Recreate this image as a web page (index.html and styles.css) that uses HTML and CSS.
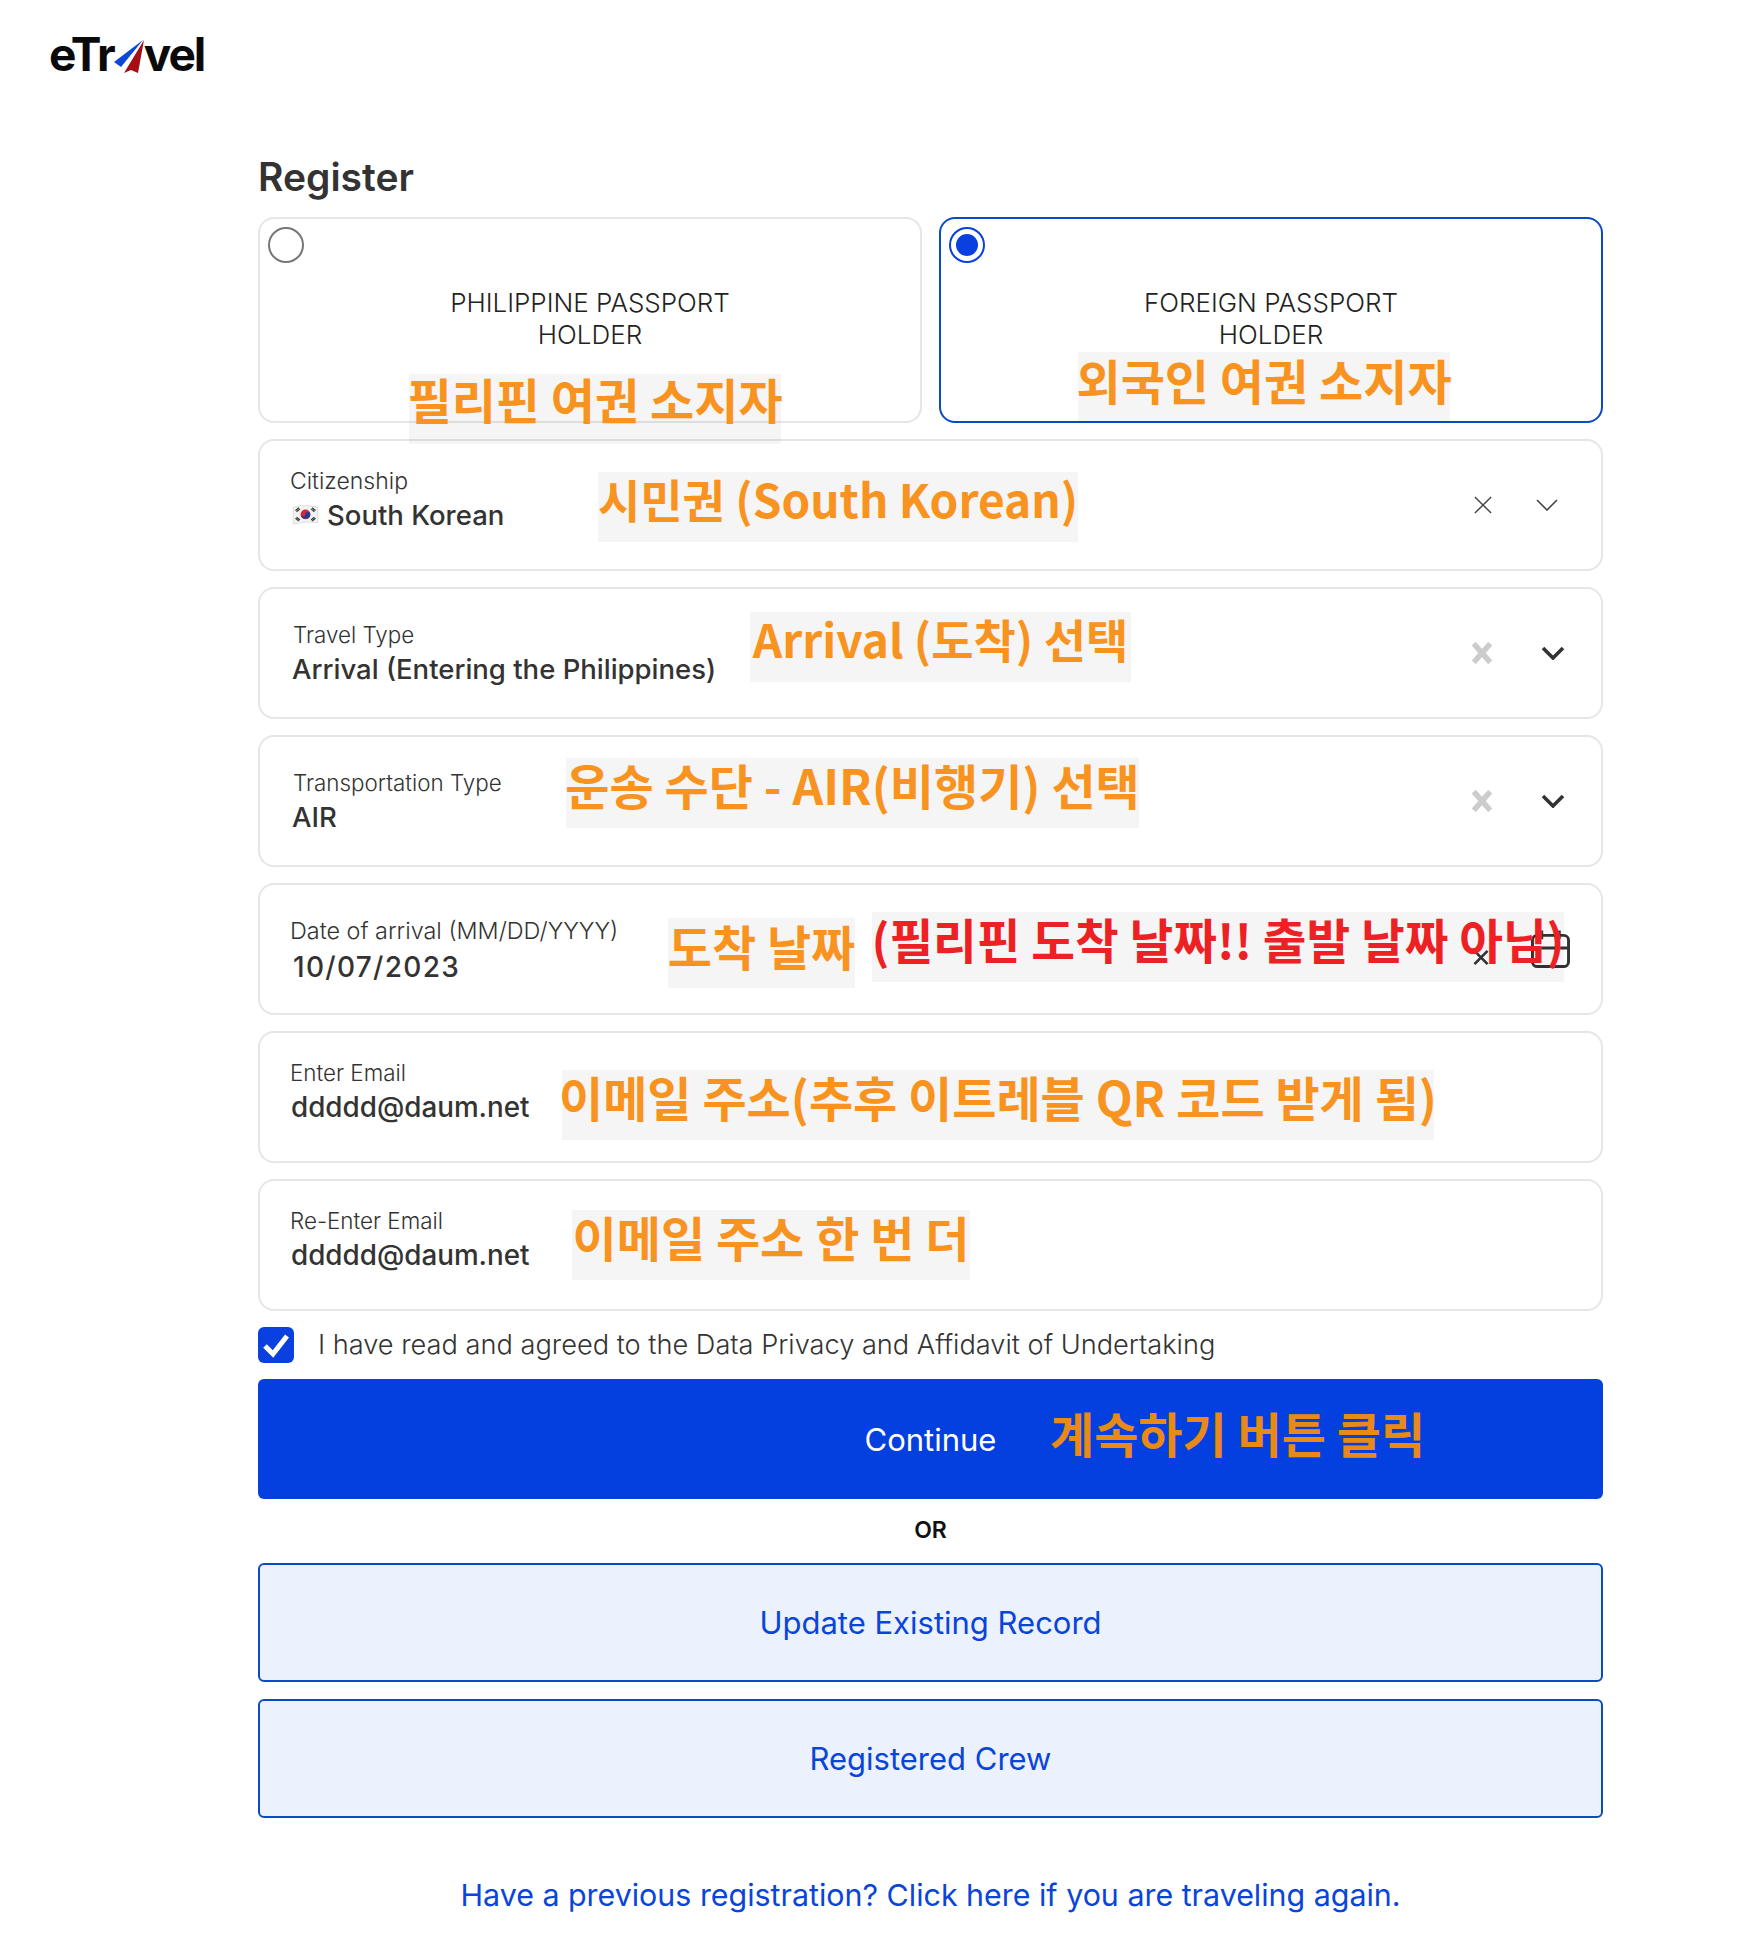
FILE: index.html
```html
<!DOCTYPE html>
<html lang="en">
<head>
<meta charset="utf-8">
<title>eTravel Register</title>
<link rel="stylesheet" href="styles.css">
</head>
<body>
<header class="site-header">
  <div class="logo">
    <span>eTr</span>
    <svg class="logo-plane" viewBox="0 0 32 36" aria-hidden="true">
      <path d="M30 1 L1 23 L8 28 Z" fill="#0b47d9"/>
      <path d="M31 1 L11 34 L18 31 L25 34 Z" fill="#a50e15"/>
    </svg>
    <span>vel</span>
  </div>
</header>
<main class="form">
  <h1 class="title">Register</h1>
  <div class="passport-row">
    <div class="passport">
      <span class="radio"></span>
      <p class="passport-label">PHILIPPINE PASSPORT<br>HOLDER</p>
      <span class="note note-1">필리핀 여권 소지자</span>
    </div>
    <div class="passport passport-on">
      <span class="radio radio-on"></span>
      <p class="passport-label">FOREIGN PASSPORT<br>HOLDER</p>
      <span class="note note-2">외국인 여권 소지자</span>
    </div>
  </div>

  <div class="field">
    <div class="field-text">
      <div class="label label-lg">Citizenship</div>
      <div class="value value-flag">
        <svg class="flag" viewBox="0 0 24 18" aria-hidden="true">
          <path d="M1 2 Q12 -1 23 2 L23 16 Q12 14 1 17 Z" fill="#f3f3f3" stroke="#cfcfcf" stroke-width=".6"/>
          <circle cx="12" cy="8.5" r="4.4" fill="#d5263a"/>
          <path d="M7.7 8.5 a4.4 4.4 0 0 0 8.7 0 a2.2 2.2 0 0 0 -4.4 0 a2.2 2.2 0 0 1 -4.3 0Z" fill="#1c3f94"/>
          <path d="M3 5 L6 2.5 M4 6 L7 3.5 M18 2.5 L21 5 M17 3.5 L20 6 M3 12 L6 14.5 M4 11 L7 13.5 M18 14.5 L21 12 M17 13.5 L20 11" stroke="#333" stroke-width="1.1"/>
        </svg>
        <span>South Korean</span>
      </div>
    </div>
    <span class="note note-3">시민권 (South Korean)</span>
    <div class="icons">
      <svg class="ico-x-thin" viewBox="0 0 20 20"><path d="M1 1 L19 19 M19 1 L1 19" stroke="#444" stroke-width="1.6" fill="none"/></svg>
      <svg class="ico-chev-thin" viewBox="0 0 22 12"><path d="M1 1 L11 11 L21 1" stroke="#444" stroke-width="1.6" fill="none"/></svg>
    </div>
  </div>

  <div class="field field-deep">
    <div class="field-text">
      <div class="label">Travel Type</div>
      <div class="value">Arrival (Entering the Philippines)</div>
    </div>
    <span class="note note-4">Arrival (도착) 선택</span>
    <div class="icons">
      <svg class="ico-x" viewBox="0 0 20 20"><path d="M2.5 1.5 L17.5 18.5 M17.5 1.5 L2.5 18.5" stroke="#cccccc" stroke-width="5" fill="none"/></svg>
      <svg class="ico-chev" viewBox="0 0 24 14"><path d="M2 2 L12 12 L22 2" stroke="#333" stroke-width="3.6" fill="none"/></svg>
    </div>
  </div>

  <div class="field field-deep">
    <div class="field-text">
      <div class="label">Transportation Type</div>
      <div class="value">AIR</div>
    </div>
    <span class="note note-5">운송 수단 - AIR(비행기) 선택</span>
    <div class="icons">
      <svg class="ico-x" viewBox="0 0 20 20"><path d="M2.5 1.5 L17.5 18.5 M17.5 1.5 L2.5 18.5" stroke="#cccccc" stroke-width="5" fill="none"/></svg>
      <svg class="ico-chev" viewBox="0 0 24 14"><path d="M2 2 L12 12 L22 2" stroke="#333" stroke-width="3.6" fill="none"/></svg>
    </div>
  </div>

  <div class="field field-date">
    <div class="field-text">
      <div class="label label-date">Date of arrival (MM/DD/YYYY)</div>
      <div class="value value-date">10/07/2023</div>
    </div>
    <div class="icons">
      <svg class="ico-x-dark" viewBox="0 0 18 16"><path d="M2 1 L16 15 M16 1 L2 15" stroke="#333" stroke-width="2.8" fill="none"/></svg>
      <svg class="ico-cal" viewBox="0 0 40 40"><rect x="1.5" y="6" width="37" height="32" rx="5" fill="none" stroke="#333" stroke-width="3"/><path d="M1.5 19 H38.5 M11 1 V10 M29 1 V10" stroke="#333" stroke-width="3" fill="none"/></svg>
    </div>
    <span class="note note-6">도착 날짜</span>
    <span class="note note-7">(필리핀 도착 날짜!! 출발 날짜 아님)</span>
  </div>

  <div class="field">
    <div class="field-text">
      <div class="label">Enter Email</div>
      <div class="value value-mail">ddddd@daum.net</div>
    </div>
    <span class="note note-8">이메일 주소(추후 이트레블 QR 코드 받게 됨)</span>
  </div>

  <div class="field">
    <div class="field-text">
      <div class="label">Re-Enter Email</div>
      <div class="value value-mail">ddddd@daum.net</div>
    </div>
    <span class="note note-9">이메일 주소 한 번 더</span>
  </div>

  <div class="agree">
    <svg class="check" viewBox="0 0 36 36" aria-hidden="true">
      <rect width="36" height="36" rx="6" fill="#0a40e0"/>
      <path d="M7 19 L15 27 L29 9" stroke="#fff" stroke-width="5" fill="none"/>
    </svg>
    <span class="agree-text">I have read and agreed to the Data Privacy and Affidavit of Undertaking</span>
  </div>

  <button class="btn btn-main" type="button">Continue<span class="note note-10">계속하기 버튼 클릭</span></button>
  <div class="or">OR</div>
  <button class="btn btn-alt" type="button">Update Existing Record</button>
  <button class="btn btn-alt" type="button">Registered Crew</button>
  <a class="again" href="#">Have a previous registration? Click here if you are traveling again.</a>
</main>
</body>
</html>
```
FILE: styles.css
```css
* { box-sizing: border-box; }
html, body { margin: 0; padding: 0; background: #fff; }
body {
  font-family: "Inter", "Noto Sans CJK KR", sans-serif;
  color: #333;
  width: 1739px;
  height: 1954px;
  overflow: hidden;
}
.site-header { height: 155px; padding: 29px 0 0 49px; }
.logo {
  display: flex;
  align-items: center;
  height: 50px;
  font-size: 46px;
  font-weight: 700;
  letter-spacing: -2px;
  color: #0a0a0a;
}
.logo-plane { width: 32px; height: 36px; margin: 6px -1px 0 -1px; flex: none; }
.form { width: 1345px; margin-left: 258px; display: flex; flex-direction: column; }
.title { margin: 0 0 18px; font-size: 39px; line-height: 44px; font-weight: 600; color: #333; }
.passport-row { display: grid; grid-template-columns: 664px 664px; gap: 17px; margin-bottom: 16px; }
.passport {
  height: 206px;
  border: 2px solid #e6e6e6;
  border-radius: 16px;
  padding: 8px;
}
.passport-on { border-color: #0a4bc2; }
.radio {
  display: block;
  width: 36px;
  height: 36px;
  border: 2px solid #777;
  border-radius: 50%;
}
.radio-on { border-color: #0a40e0; position: relative; }
.radio-on::after {
  content: "";
  position: absolute;
  inset: 5px;
  border-radius: 50%;
  background: #0a40e0;
}
.passport-label {
  margin: 24px 0 0;
  text-align: center;
  font-size: 26px;
  line-height: 32px;
  font-weight: 300;
  color: #222;
}
.field {
  display: flex;
  align-items: center;
  height: 132px;
  border: 2px solid #e6e6e6;
  border-radius: 16px;
  padding: 0 30px;
  margin-bottom: 16px;
}
.field-text { align-self: flex-start; padding-top: 26px; }
.field-deep .field-text { padding-top: 32px; padding-left: 3px; }
.field-deep .value { padding-left: 0; margin-left: -1px; }
.field-date .field-text { padding-top: 32px; }
.label { font-size: 22.4px; line-height: 28px; font-weight: 300; color: #333; }
.label-lg { font-size: 23px; }
.label-date { font-size: 23.4px; }
.value { font-size: 27.5px; line-height: 40px; font-weight: 500; color: #333; padding-left: 1px; }
.value-mail { font-size: 27.8px; }
.value-date { padding-left: 3px; margin-top: 2px; font-size: 28px; letter-spacing: 1.3px; }
.value-flag { display: flex; align-items: center; padding-left: 2px; }
.flag { width: 27px; height: 20px; margin-right: 8px; flex: none; }
.icons { margin-left: auto; display: flex; align-items: center; }
.ico-x-thin { width: 20px; height: 18px; margin-right: 43px; }
.ico-chev-thin { width: 22px; height: 12px; margin-right: 13px; }
.ico-x { width: 22px; height: 22px; margin-right: 48px; }
.ico-chev { width: 24px; height: 14px; margin-right: 6px; }
.ico-x-dark { width: 18px; height: 15px; margin: 16px 41px 0 0; }
.ico-cal { width: 39px; height: 40px; margin: 0 1px 0 0; }
.agree { display: flex; align-items: center; gap: 24px; height: 36px; margin-bottom: 16px; font-size: 27.2px; font-weight: 300; color: #333; }
.agree-text { margin-top: -2px; }
.check { width: 36px; height: 36px; flex: none; }
.btn {
  display: block;
  width: 100%;
  font-family: inherit;
  font-size: 31px;
  border-radius: 6px;
  padding: 0;
}
.btn-main { height: 120px; background: #0440e0; color: #fff; border: 0; font-weight: 400; }
.or { margin: 17px 0 19px; text-align: center; font-size: 23px; line-height: 28px; font-weight: 600; color: #111; }
.btn-alt { height: 119px; background: #ebf2fe; border: 2px solid #0a4bc2; color: #0a45d8; font-weight: 400; margin-bottom: 17px; }
.again { margin-top: 41px; text-align: center; font-size: 30.4px; line-height: 38px; color: #0a45d8; text-decoration: none; }

.note {
  position: absolute;
  display: flex;
  align-items: center;
  justify-content: center;
  height: 70px;
  padding-bottom: 19px;
  line-height: 1;
  background: rgba(0, 0, 0, .04);
  font-family: "Noto Sans CJK KR", "Inter", sans-serif;
  font-weight: 700;
  font-size: 48px;
  color: #f7931e;
  white-space: nowrap;
}
.note-1 { left: 409px; top: 374px; width: 372px; padding-bottom: 22px; }
.note-2 { left: 1078px; top: 352px; width: 372px; padding-bottom: 17px; }
.note-3 { left: 598px; top: 472px; width: 480px; font-size: 46px; }
.note-4 { left: 750px; top: 612px; width: 381px; font-size: 46px; }
.note-5 { left: 566px; top: 758px; width: 573px; }
.note-6 { left: 668px; top: 918px; width: 187px; padding-bottom: 17px; }
.note-7 { left: 872px; top: 912px; width: 692px; padding-bottom: 17px; font-size: 47.5px; color: #ed2024; }
.note-8 { left: 562px; top: 1070px; width: 872px; }
.note-9 { left: 572px; top: 1210px; width: 398px; }
.note-10 { left: 1053px; top: 1406px; width: 369px; background: none; color: #e98a16; }
```
